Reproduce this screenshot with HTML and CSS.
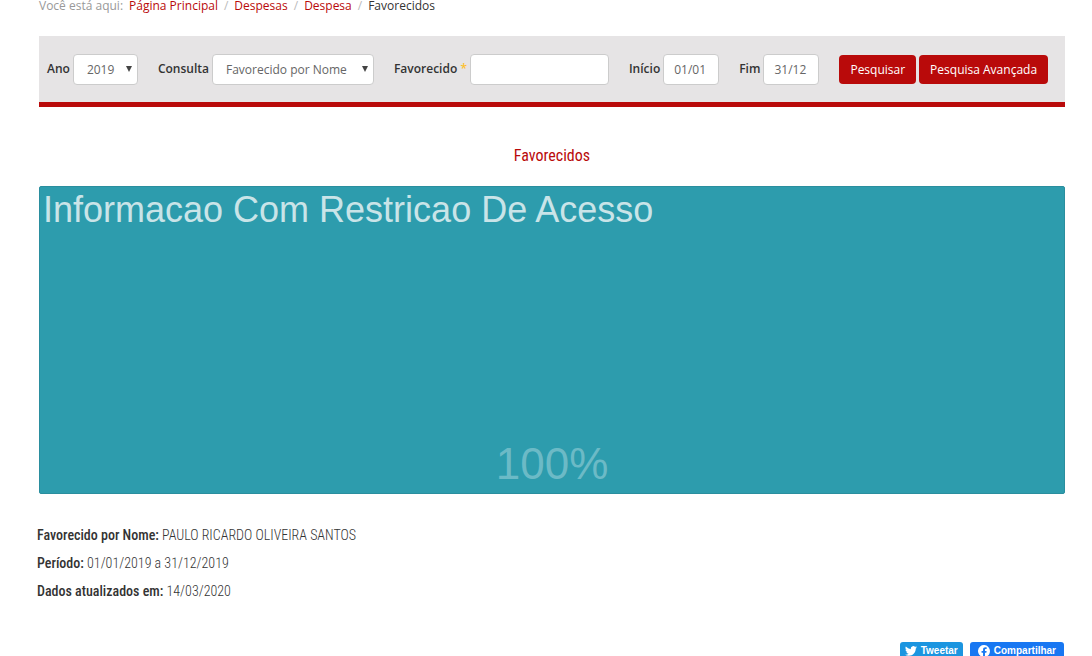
FILE: index.html
```html
<!DOCTYPE html>
<html lang="pt-BR">
<head>
<meta charset="utf-8">
<title>Favorecidos</title>
<link rel="stylesheet" href="styles.css">
</head>
<body>
<nav class="breadcrumb" aria-label="Você está aqui">
  <span class="lead">Você está aqui:</span>
  <a href="#">Página Principal</a><span class="sep">/</span>
  <a href="#">Despesas</a><span class="sep">/</span>
  <a href="#">Despesa</a><span class="sep">/</span>
  <span class="current">Favorecidos</span>
</nav>
<main>
  <form class="filters">
    <div class="field"><label for="ano">Ano</label>
      <span class="select year"><select id="ano"><option>2019</option></select></span></div>
    <div class="field"><label for="consulta">Consulta</label>
      <span class="select query"><select id="consulta"><option>Favorecido por Nome</option></select></span></div>
    <div class="field"><label for="favorecido">Favorecido <span class="required">*</span></label>
      <input class="name" id="favorecido" type="text"></div>
    <div class="field"><label for="inicio">Início</label>
      <input class="date" id="inicio" type="text" value="01/01"></div>
    <div class="field"><label for="fim">Fim</label>
      <input class="date" id="fim" type="text" value="31/12"></div>
    <div class="actions">
      <button type="submit">Pesquisar</button>
      <button type="button">Pesquisa Avançada</button>
    </div>
  </form>
  <h1 class="title">Favorecidos</h1>
  <section class="treemap">
    <span class="treemap-name">Informacao Com Restricao De Acesso</span>
    <span class="treemap-share">100%</span>
  </section>
  <section class="summary">
    <p><strong>Favorecido por Nome:</strong> PAULO RICARDO OLIVEIRA SANTOS</p>
    <p><strong>Período:</strong> 01/01/2019 a 31/12/2019</p>
    <p><strong>Dados atualizados em:</strong> 14/03/2020</p>
  </section>
</main>
<footer class="share">
  <a class="tweet" href="#"><svg width="12" height="12" viewBox="0 0 24 24" fill="#fff" aria-hidden="true"><path d="M24 4.6a10 10 0 0 1-2.8.8 5 5 0 0 0 2.1-2.7 10 10 0 0 1-3.1 1.2 4.9 4.9 0 0 0-8.4 4.5A14 14 0 0 1 1.700 3.200a4.900 4.900 0 0 0 1.500 6.500 4.900 4.900 0 0 1-2.200-.6 4.900 4.900 0 0 0 3.900 4.900 5 5 0 0 1-2.200.1 4.900 4.900 0 0 0 4.600 3.400A9.900 9.900 0 0 1 0 19.500a14 14 0 0 0 7.500 2.200c9.100 0 14.300-7.700 14-14.600A10 10 0 0 0 24 4.600z"/></svg>Tweetar</a>
  <a class="facebook" href="#"><svg width="12" height="12" viewBox="0 0 24 24" fill="#fff" aria-hidden="true"><path d="M24 12a12 12 0 1 0-13.900 11.900v-8.400H7.100V12h3V9.400c0-3 1.800-4.700 4.600-4.700 1.300 0 2.600.2 2.600.2v3h-1.500c-1.500 0-1.900.9-1.900 1.900V12h3.300l-.5 3.500h-2.800v8.400A12 12 0 0 0 24 12z"/></svg>Compartilhar</a>
</footer>
</body>
</html>
```
FILE: styles.css
```css
* { box-sizing: border-box; }
html { overflow: hidden; }
body {
  margin: 0;
  padding: 0 27px 0 39px;
  background: #fff;
  color: #333;
  font: 400 12px/20px "Open Sans", "Noto Sans", sans-serif;
}
a { color: #b90a0a; text-decoration: none; }

.breadcrumb {
  display: flex;
  gap: 6px;
  height: 36px;
  line-height: 12px;
}
.lead { color: #999; }
.sep { color: #bbb; }

.filters {
  display: flex;
  flex-wrap: wrap;
  align-items: center;
  gap: 20px;
  padding: 18px 8px 17px;
  background: #e6e4e5;
  border-bottom: 5px solid #b90a0a;
}
.field { display: flex; align-items: center; gap: 3px; }
.field label { font-weight: 600; line-height: 28px; padding-bottom: 2px; }
.required { color: #fdc02f; }
.field input, .field select {
  width: 100%;
  height: 31px;
  border: 1px solid #ccc;
  border-radius: 4px;
  background: #fff;
  color: #666;
  font: inherit;
  padding: 0 10px;
}
.select { position: relative; display: block; }
.select select { appearance: none; padding-left: 13px; }
.select::after {
  content: "";
  position: absolute;
  right: 6px;
  top: 12px;
  border: 3px solid transparent;
  border-top: 6px solid #444;
  border-bottom: 0;
  pointer-events: none;
}
.year { width: 65px; }
.query { width: 162px; }
.field .name { width: 139px; }
.field .date { width: 56px; }
.actions { display: flex; gap: 3px; }
.actions button {
  height: 29px;
  border: 0;
  border-radius: 4px;
  padding: 0 11px;
  background: #b90a0a;
  color: #fff;
  font: inherit;
}

.title {
  margin: 35px 0 16px;
  text-align: center;
  color: #b90a0a;
  font: 400 16px/28px "Roboto Condensed", Roboto, sans-serif;
}
.treemap {
  display: flex;
  flex-direction: column;
  justify-content: space-between;
  min-height: 308px;
  padding: 3px;
  padding-bottom: 7px;
  border: 1px solid #2a8e9e;
  border-radius: 2px;
  background: #2d9cad;
  font-family: "Liberation Sans", Arial, sans-serif;
}
.treemap-name { color: #c9e4e8; font-size: 36px; line-height: 40px; }
.treemap-share { color: #6cbac6; font-size: 44px; line-height: 44px; text-align: center; }

.summary {
  margin: 27px -2px 0;
  font: 300 14px/28px "Roboto Condensed", Roboto, sans-serif;
}
.summary p { margin: 0; }
.summary strong { font-weight: 500; }

.share {
  display: flex;
  justify-content: flex-end;
  gap: 7px;
  padding: 37px 1px 0 0;
}
.share a {
  display: flex;
  align-items: center;
  gap: 4px;
  height: 20px;
  padding: 0 5px 2px;
  border-radius: 3px;
  color: #fff;
  font: 700 10px/18px "Liberation Sans", Arial, sans-serif;
}
.tweet { background: #1b95e0; }
.share .facebook { padding: 0 8px 2px; background: #1877f2; }
```
